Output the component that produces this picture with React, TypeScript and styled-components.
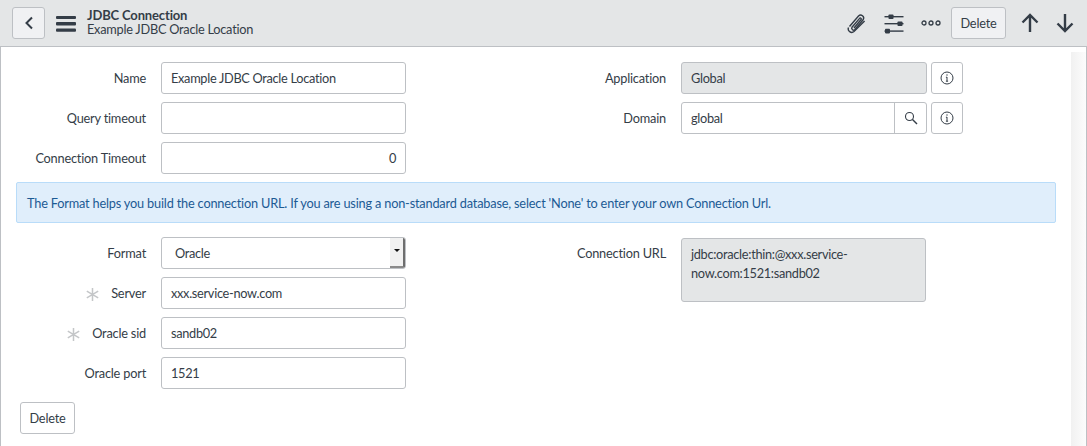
import React from "react"
import styled, { createGlobalStyle } from "styled-components"

const GlobalStyle = createGlobalStyle`
    html, body { margin: 0; padding: 0; background: #fff; }
    body { font-family: "Lato", "Liberation Sans", sans-serif; font-size: 12.75px; letter-spacing: -0.2px; color: #343d47; }
`

const Page = styled.div`
    width: 1087px;
    height: 446px;
    overflow: hidden;
    display: flex;
    flex-direction: column;
    box-sizing: border-box;
`

const Header = styled.header`
    height: 47px;
    flex: none;
    box-sizing: border-box;
    background: #e4e6e7;
    border-bottom: 1px solid #bdc0c4;
    display: flex;
    align-items: center;
    padding: 0 12px 1px 12px;
`

const Button = styled.button`
    height: 32px;
    box-sizing: border-box;
    border: 1px solid #bdc0c4;
    border-radius: 3px;
    background: ${props => (props.$flat ? "#fff" : "#f0f1f3")};
    color: #343d47;
    font: inherit;
    letter-spacing: inherit;
    padding: 0;
    display: flex;
    align-items: center;
    justify-content: center;
    flex: none;
`

const BackButton = styled(Button)`
    width: 33px;
`

const Burger = styled.svg`
    width: 20px;
    height: 16px;
    margin: 2px 0 0 11px;
    flex: none;
`

const Titles = styled.div`
    margin: -2px 0 0 11px;
    line-height: 14px;
    flex: 1;
`

const Title = styled.div`
    font-weight: 700;
    font-size: 13px;
    letter-spacing: -0.15px;
`

const Subtitle = styled.div`
    letter-spacing: -0.25px;
`

const Actions = styled.div`
    display: flex;
    align-items: center;
`

const ActionIcon = styled.svg`
    display: block;
    flex: none;
    margin-left: ${props => props.$gap}px;
    margin-top: ${props => props.$drop || 0}px;
`

const DeleteTop = styled(Button)`
    width: 55px;
    margin-left: 10px;
`

const Body = styled.div`
    flex: 1;
    display: flex;
    border-right: 1px solid #bdc0c4;
`

const Main = styled.main`
    width: 1071px;
    flex: none;
    box-sizing: border-box;
    border-left: 1px solid #bdc0c4;
    padding: 15px 15px 0 15px;
`

const Strip = styled.div`
    flex: 1;
    margin-top: 5px;
    background: linear-gradient(to right, #f1f1f1, #fcfcfc);
`

const FormGrid = styled.div`
    display: grid;
    grid-template-columns: 520px 520px;
`

const Column = styled.div`
    display: flex;
    flex-direction: column;
    gap: 8px;
`

const Row = styled.div`
    display: flex;
    align-items: ${props => (props.$top ? "flex-start" : "center")};
    height: ${props => props.$height || 32}px;
    margin-top: ${props => (props.$top ? "1px" : "0")};
`

const Label = styled.label`
    width: 130px;
    flex: none;
    display: flex;
    justify-content: flex-end;
    align-items: center;
    margin-right: 15px;
    line-height: 18px;
    color: #343d47;
    padding-top: ${props => (props.$top ? "6px" : "0")};
`

const Required = styled.svg`
    width: 13px;
    height: 13px;
    margin-right: 12px;
    margin-top: 3px;
`

const Field = styled.div`
    width: ${props => props.$width || 245}px;
    height: ${props => props.$height || 32}px;
    flex: none;
    box-sizing: border-box;
    border: 1px solid #bdc0c4;
    border-radius: 3px;
    background: ${props => (props.$readonly ? "#e4e6e7" : "#fff")};
    padding: ${props => (props.$multi ? "6px 9px" : "0 9px")};
    display: flex;
    align-items: ${props => (props.$multi ? "flex-start" : "center")};
    justify-content: ${props => (props.$right ? "flex-end" : "flex-start")};
    line-height: ${props => (props.$multi ? 19 : 20)}px;
    letter-spacing: -0.3px;
    color: #343d47;
`

const SelectBox = styled(Field)`
    padding: 0 0 0 13px;
    justify-content: space-between;
    overflow: hidden;
`

const SelectArrow = styled.div`
    width: 15px;
    height: 100%;
    box-sizing: border-box;
    background: #f1f1f1;
    border-right: 2px solid #6e6e6e;
    border-bottom: 2px solid #8a8a8a;
    display: flex;
    align-items: center;
    justify-content: center;
    &::after {
        content: "";
        margin-bottom: 3px;
        border-left: 3px solid transparent;
        border-right: 3px solid transparent;
        border-top: 3px solid #111;
    }
`

const LookupBox = styled(Field)`
    padding: 0 0 0 9px;
    justify-content: space-between;
`

const LookupButton = styled.div`
    width: 31px;
    height: 100%;
    flex: none;
    border-left: 1px solid #bdc0c4;
    display: flex;
    align-items: center;
    justify-content: center;
`

const InfoButton = styled(Button)`
    width: 32px;
    margin-left: 4px;
`

const Alert = styled.div`
    height: 41px;
    box-sizing: border-box;
    margin: 8px 0 14px;
    padding: 0 10px;
    display: flex;
    align-items: center;
    background: #e0eefb;
    border: 1px solid #b9dcf9;
    border-radius: 2px;
    letter-spacing: -0.19px;
    color: #1c5a94;
`

const FooterButton = styled(Button)`
    width: 55px;
    margin: 13px 0 0 4px;
`

const InfoIcon = () => (
    <svg width="14" height="14" viewBox="0 0 14 14" fill="none" stroke="#343d47">
        <circle cx="7" cy="7" r="6" strokeWidth="1" />
        <path d="M7 6v4.2M5.9 10.2h2.2M5.9 6.2H7" strokeWidth="1" />
        <circle cx="7" cy="4" r=".7" fill="#343d47" stroke="none" />
    </svg>
)

type TextRowProps = {
    label: string
    value?: string
    required?: boolean
    right?: boolean
}

const TextRow: React.FC<TextRowProps> = (props) => (
    <Row>
        <Label>
            {props.required && (
                <Required viewBox="1 1 13 13" stroke="#c4c6c8" strokeWidth="1.5">
                    <path d="M7.5 1v13M1.8 4.2l11.4 6.6M13.2 4.2L1.8 10.8" />
                </Required>
            )}
            {props.label}
        </Label>
        <Field $right={props.right}>{props.value}</Field>
    </Row>
)

export default function App() {
    return (
        <Page>
            <GlobalStyle />
            <Header>
                <BackButton>
                    <svg width="10" height="14" viewBox="0 0 10 14" fill="none" stroke="#343d47" strokeWidth="2">
                        <path d="M8 1.5L2.5 7L8 12.5" />
                    </svg>
                </BackButton>
                <Burger viewBox="0 0 20 16" fill="#343d47">
                    <rect x="0" y="0" width="20" height="3" rx="1" />
                    <rect x="0" y="6" width="20" height="3.4" rx="1" />
                    <rect x="0" y="12.4" width="20" height="3.4" rx="1" />
                </Burger>
                <Titles>
                    <Title>JDBC Connection</Title>
                    <Subtitle>Example JDBC Oracle Location</Subtitle>
                </Titles>
                <Actions>
                    <ActionIcon $gap={0} width="22" height="22" viewBox="0 0 22 22" fill="none" stroke="#343d47" strokeWidth="1.4">
                        <path d="M3.5 14.5L12.5 4a3 3 0 0 1 4.6 3.8L9 17.5a1.9 1.9 0 0 1-3-2.3L13.6 6.4a.9.9 0 0 1 1.5 1.1L8 16" />
                        <path d="M2.5 15.5a3.5 3.5 0 0 0 5.5 4L18.6 9" />
                    </ActionIcon>
                    <ActionIcon $gap={16} width="20" height="22" viewBox="0 0 20 22" fill="#343d47" stroke="none">
                        <rect x="0.5" y="4" width="19" height="1.4" />
                        <rect x="0.5" y="11" width="19" height="1.4" />
                        <rect x="0.5" y="18.4" width="19" height="1.4" />
                        <rect x="4.5" y="2.4" width="5" height="4.6" rx=".8" />
                        <rect x="13.5" y="9.4" width="5" height="4.6" rx=".8" />
                        <rect x="1" y="16.8" width="5" height="4.6" rx=".8" />
                    </ActionIcon>
                    <ActionIcon $gap={17} $drop={1} width="20" height="8" viewBox="0 0 20 8" fill="none" stroke="#343d47" strokeWidth="1.3">
                        <circle cx="3" cy="4" r="2" />
                        <circle cx="10" cy="4" r="2" />
                        <circle cx="17" cy="4" r="2" />
                    </ActionIcon>
                    <DeleteTop>Delete</DeleteTop>
                    <ActionIcon $gap={14} width="20" height="20" viewBox="0 0 20 20" fill="none" stroke="#343d47" strokeWidth="2.4">
                        <path d="M10 19V2M2.5 9.5L10 2l7.5 7.5" />
                    </ActionIcon>
                    <ActionIcon $gap={15} width="20" height="20" viewBox="0 0 20 20" fill="none" stroke="#343d47" strokeWidth="2.4">
                        <path d="M10 1v17M2.5 10.5L10 18l7.5-7.5" />
                    </ActionIcon>
                </Actions>
            </Header>
            <Body>
                <Main>
                    <FormGrid>
                        <Column>
                            <TextRow label="Name" value="Example JDBC Oracle Location" />
                            <TextRow label="Query timeout" />
                            <TextRow label="Connection Timeout" value="0" right />
                        </Column>
                        <Column>
                            <Row>
                                <Label>Application</Label>
                                <Field $readonly $width={246}>Global</Field>
                                <InfoButton $flat><InfoIcon /></InfoButton>
                            </Row>
                            <Row>
                                <Label>Domain</Label>
                                <LookupBox $width={246}>
                                    global
                                    <LookupButton>
                                        <svg width="14" height="14" viewBox="0 0 14 14" fill="none" stroke="#343d47" strokeWidth="1.1">
                                            <circle cx="5.5" cy="5.5" r="4" />
                                            <path d="M8.5 8.5L13 13" strokeWidth="1.4" />
                                        </svg>
                                    </LookupButton>
                                </LookupBox>
                                <InfoButton $flat><InfoIcon /></InfoButton>
                            </Row>
                        </Column>
                    </FormGrid>
                    <Alert>The Format helps you build the connection URL. If you are using a non-standard database, select 'None' to enter your own Connection Url.</Alert>
                    <FormGrid>
                        <Column>
                            <Row>
                                <Label>Format</Label>
                                <SelectBox>
                                    Oracle
                                    <SelectArrow />
                                </SelectBox>
                            </Row>
                            <TextRow label="Server" value="xxx.service-now.com" required />
                            <TextRow label="Oracle sid" value="sandb02" required />
                            <TextRow label="Oracle port" value="1521" />
                        </Column>
                        <Column>
                            <Row $top $height={64}>
                                <Label $top>Connection URL</Label>
                                <Field $readonly $multi $width={245} $height={64}>
                                    jdbc:oracle:thin:@xxx.service-now.com:1521:sandb02
                                </Field>
                            </Row>
                        </Column>
                    </FormGrid>
                    <FooterButton $flat>Delete</FooterButton>
                </Main>
                <Strip />
            </Body>
        </Page>
    )
}
